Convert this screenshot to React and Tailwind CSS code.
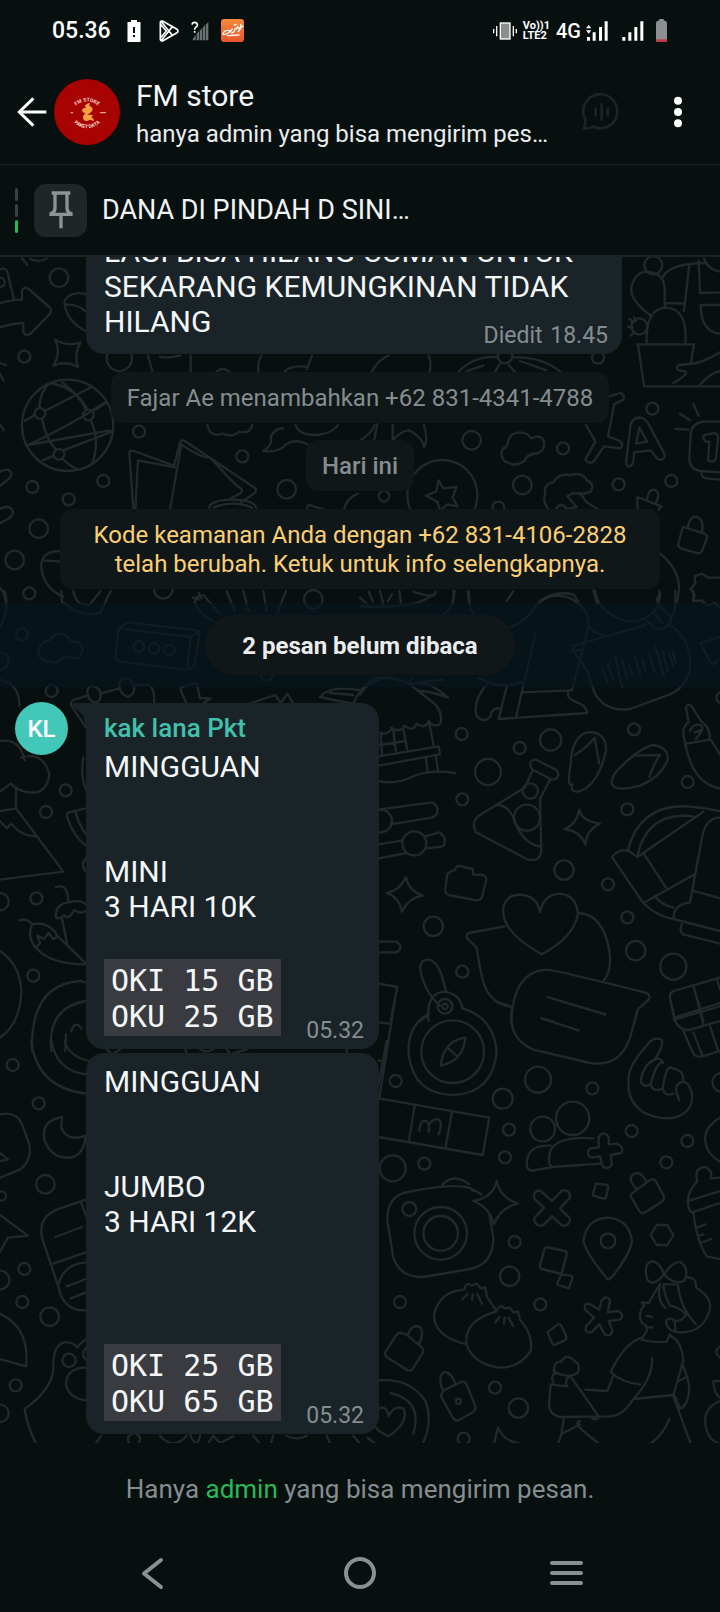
import React from 'react';

const ROBOTO = "font-['Roboto','Liberation_Sans',sans-serif]";
const MONO = "font-['DejaVu_Sans_Mono','Liberation_Mono',monospace]";

// Every wallpaper tile: where it starts, its loose circles [cx, cy, r] and its line drawings
const doodleTiles = [
  {
    x: 0,
    y: 720,
    circles: [
      [177, 110, 28], [73, 347, 18], [417, 572, 18], [310, 720, 18], [97, 738, 18], [206, 775, 18],
      [116, 863, 28], [44, 957, 28], [88, 1057, 18], [860, 745, 28], [727, 646, 18], [490, 1045, 28],
      [940, 1075, 28], [203, 553, 137], [120, 517, 16], [265, 522, 16], [177, 640, 16], [0, 124, 14],
      [358, 352, 38]
    ],
    paths: [
      // arrow
      'M0 85 Q16 78 22 92 L42 176',
      'M-10 190 Q30 176 66 176 L66 150 Q72 134 86 144 L148 198 Q158 208 148 220 L92 278 Q76 288 70 272 L70 246 Q30 248 -10 262',
      // leaf
      'M258 160 C220 148 190 168 194 192 C200 230 226 254 260 272 M194 192 Q230 186 260 214',
      // sparkle
      'M166 296 Q204 318 242 304 Q220 340 234 378 Q198 358 160 374 Q184 336 166 296 Z',
      // globe
      'M74 540 L104 522 M134 510 L275 438 M84 612 L330 568 M84 612 Q200 560 316 484 M128 658 L162 644 M190 628 L336 572',
      'M118 500 Q120 450 150 426 M126 534 Q136 590 168 626 M186 424 Q236 460 258 506 M150 426 Q230 440 262 506 M272 538 Q302 600 276 668 M188 654 Q210 676 236 686 M280 510 L318 486',
      // map
      'M400 806 L388 636 Q390 626 402 630 L522 674 L540 604 Q546 594 558 602 L764 740 Q772 748 764 756 L724 784 M406 806 L414 658 L528 680 M510 806 L544 610 Q600 650 630 650 C670 690 690 720 724 744 Q728 750 722 756 L690 774',
      'M628 800 C628 768 768 768 768 800 M640 800 Q700 776 756 800',
      // chilli and cloud
      'M622 552 Q630 590 668 578 Q700 590 716 572 Q752 580 756 552 M790 630 Q820 610 812 590 Q824 560 850 562 M790 630 Q840 636 860 608 Q890 592 926 612 M886 552 Q900 584 950 582 Q1000 576 1014 552',
      // things at the left edge
      'M-6 740 L26 714 Q40 700 30 690 Q20 680 -6 696 M-6 850 L30 830 Q44 818 36 806 Q26 790 -6 806 M0 366 L18 372 M0 398 L10 418 M-4 545 L12 568',
      'M444 344 L458 394 M572 344 L572 394 M784 344 Q770 368 776 394 M936 344 L920 386 M480 348 Q510 352 540 344 M852 394 Q870 370 924 378 M650 392 Q668 376 688 392',
      'M182 930 Q120 930 124 980 Q130 1040 190 1068 M130 958 L184 962 M0 1040 Q16 1060 18 1090',
      'M922 806 Q918 786 940 796 L974 806 M1032 806 Q1040 770 1074 758 M66 52 Q76 64 82 72 M90 54 Q120 66 140 52'
    ]
  },
  {
    x: 1080,
    y: 720,
    circles: [
      [335, 598, 28], [487, 732, 28], [609, 622, 18], [776, 730, 18], [934, 720, 18], [877, 503, 18],
      [714, 350, 18], [415, 800, 18], [247, 762, 105], [880, 73, 27], [838, 256, 24], [72, 765, 16],
      [435, 345, 22]
    ],
    paths: [
      // cactus
      'M832 310 L1002 310 L992 370 M834 310 L852 436 L1080 436 M860 308 Q856 202 918 200 Q984 202 976 308 M870 222 Q808 176 814 138 Q826 92 862 92 Q912 96 914 142 L914 200 M908 108 Q930 66 1040 66 M988 70 L972 210 M916 186 L970 188',
      'M808 234 L822 244 M804 258 L818 258 M812 284 L824 272 M822 228 L828 240',
      'M1016 60 L1020 156 L1080 154 M1022 192 L1080 192 M1022 192 Q1022 272 1080 278 M1032 52 Q1040 84 1080 92',
      // hand
      'M1080 334 Q1030 364 998 368 L956 372 Q944 382 958 388 L978 392 Q982 402 940 426 M1080 390 Q1050 396 1020 432',
      // bow
      'M34 394 Q54 356 86 344 M206 344 Q216 370 208 394 M294 394 Q340 344 412 348 M458 350 Q540 344 604 394 M320 390 L370 374 M404 394 L420 368 M446 372 L466 394 M480 360 L560 388',
      // X and A
      'M748 466 L780 456 Q796 460 790 476 L762 490 Q754 540 744 586 L780 600 Q794 612 780 622 L732 616 L702 660 Q688 672 676 656 L706 602 L678 552',
      'M798 664 L812 550 Q822 526 842 530 Q858 534 866 550 L912 636 Q918 652 904 656 Q892 658 886 646 L872 628 L822 634 L820 664 Q814 678 804 676 Q798 674 798 664 Z M828 608 L838 560 L862 602 Z',
      // keycap
      'M1080 542 L1030 542 Q994 546 992 580 L988 650 Q988 684 1020 690 L1080 694 M1024 690 Q1022 710 1040 712 L1080 716 M1030 592 Q1030 580 1042 580 L1064 576 Q1076 580 1074 592 L1068 652 Q1060 668 1044 658 L1048 602 Q1034 604 1030 592 M1000 488 L1016 524 M960 518 L990 538 M946 564 L984 566',
      // popcorn cloud
      'M436 662 Q416 640 430 622 Q444 616 444 602 Q450 574 480 574 Q506 576 512 592 Q544 578 552 602 Q556 628 534 636 Q510 640 502 646 Q488 674 458 670 Z',
      // star in a coin
      'M236 718 L250 742 L290 738 L278 768 L292 796 L262 790 L240 808 L232 782 L198 764 L228 752 Z',
      // curly head
      'M566 806 Q546 780 556 760 Q548 730 580 724 Q596 696 630 702 Q670 692 680 718 Q706 728 692 752 Q668 762 640 756 L622 766 L650 798 L620 804 Q604 780 588 804 M660 756 L680 784 L716 806',
      'M832 806 L832 768 L904 796 L896 806 M862 772 Q866 740 888 748 Q902 760 888 784',
      // lock
      'M970 858 L1034 878 Q1044 884 1040 894 L1026 930 Q1020 938 1010 936 L962 922 Q952 916 956 906 L966 866 Z M984 858 Q990 822 1012 828 Q1032 834 1026 874',
      'M52 550 L42 600 M2 598 Q36 576 44 552 M98 552 L98 598 Q120 570 148 568 Q188 590 192 618 Q206 600 192 552',
      'M898 936 Q980 1000 948 1090 M992 1044 L1006 1028 L1004 1006 L1026 998 L1046 1010 L1080 1010 M992 1044 L1004 1060 L1000 1080',
      'M26 1052 L38 1080 M96 1060 L84 1080 M160 1052 Q230 1076 226 1052 M284 1050 L276 1090 M326 1050 L330 1090 M540 1080 Q584 1048 640 1060 L654 1080 M700 1048 L712 1090 M900 1056 L890 1080'
    ]
  },
  {
    x: 0,
    y: 1770,
    circles: [
      [66, 130, 18], [155, 300, 18], [197, 598, 18], [138, 663, 18], [109, 922, 18], [100, 1154, 18],
      [0, 210, 26], [0, 932, 26], [417, 166, 16], [462, 172, 16], [508, 177, 16], [800, 250, 18]
    ],
    paths: [
      'M14 0 Q30 60 0 106 M184 0 L186 32 Q240 80 300 66 L332 0 M220 0 Q230 50 270 40 L302 0',
      // cloud
      'M148 212 Q112 208 116 176 Q124 150 148 150 Q160 124 186 128 Q206 134 212 152 Q250 148 246 182 Q240 206 218 200 Q200 196 188 202 Q172 220 148 212 Z',
      // eraser
      'M356 112 L384 94 L590 118 Q600 122 598 132 L584 220 Q576 236 556 236 L360 212 Q346 206 346 194 Z M356 112 L572 138 L596 124 M572 138 L562 232',
      // carrots
      'M640 90 Q590 64 584 32 Q590 10 612 14 L660 68 M578 20 L596 26 M596 6 L604 22 M680 0 L704 60 M730 0 L746 60 M858 0 L832 66 M790 0 L800 60',
      'M0 266 Q60 280 58 346 M0 450 Q60 440 74 508 M64 500 Q130 480 148 550 Q140 610 90 604 Q60 604 32 578 L0 602 M48 590 L48 652 L190 842 L0 866 M0 660 L48 652 M0 690 L20 712 L34 698 Q60 734 106 736',
      // notebook
      'M258 410 L212 340 Q216 322 236 322 L262 314 M300 308 L358 292 M400 284 L440 280 Q466 284 462 340',
      'M262 300 Q264 282 284 286 Q306 296 302 316 Q300 334 284 334 Q262 326 262 300 Z M358 280 Q362 258 384 264 Q408 276 402 298 Q396 318 380 316 Q358 308 358 280 Z',
      'M560 338 L542 298 Q540 290 552 286 L590 276 L600 322 L632 322 L606 340 M742 340 L826 312 L842 336 L862 308 L880 338 M960 318 Q990 280 1088 300 M960 318 Q1010 330 1060 338 M990 306 L1060 312 M1060 338 Q1080 290 1120 264 Q1160 250 1200 268',
      // watermelon
      'M258 652 L206 664 Q198 668 202 680 Q220 736 258 764 M226 662 Q236 700 258 730 M258 800 Q240 820 258 842',
      // ice cream cones
      'M168 888 Q196 880 202 908 L206 934 Q164 940 168 980 Q180 986 192 972 Q204 990 222 958 Q240 970 258 960 M206 934 Q240 924 258 940 M186 982 L202 1062 M58 988 Q84 980 96 1000 Q140 990 168 1026 Q176 1040 160 1044 L146 1026 L132 1044 L112 1034 L120 1056 L108 1070 Q80 1040 96 1000',
      'M108 1070 Q150 1120 258 1120 M168 1030 L258 1118 M0 1080 Q60 1120 64 1200 Q60 1300 0 1340',
      'M96 1380 Q90 1180 240 1170 L258 1174 M154 1380 Q140 1250 258 1230 M214 1320 Q226 1286 244 1312 M198 1330 L196 1380',
      'M246 340 L260 400 M250 500 Q240 560 260 600'
    ]
  },
  {
    x: 1080,
    y: 1770,
    circles: [
      [305, 429, 18], [479, 471, 18], [572, 447, 32], [384, 543, 39], [822, 415, 18], [983, 573, 18],
      [307, 625, 18], [802, 655, 18], [612, 837, 29], [744, 880, 18], [220, 1006, 29], [802, 979, 18],
      [827, 1079, 29], [940, 1127, 39], [307, 1142, 18], [511, 600, 23], [501, 680, 39], [163, 757, 36],
      [62, 690, 34], [255, 1246, 22], [255, 1246, 8], [1085, 320, 16]
    ],
    paths: [
      'M0 20 L22 40 M60 0 L70 40 M118 0 L124 44 Q180 40 220 10 M280 0 Q290 40 250 72 M324 0 Q324 50 342 72 M440 30 L460 0 M0 46 Q60 50 120 44',
      // sitting figure
      'M450 110 Q500 90 528 44 Q570 0 626 20 Q690 50 686 104 L636 298 M528 122 L468 378 M488 304 L630 298 M440 288 L416 384 L682 366 Q678 342 650 334 Q616 320 626 302 M486 272 Q430 300 356 260 M386 272 Q336 330 350 374 Q372 400 392 374 Q394 350 422 352 M684 104 Q706 130 736 134',
      'M706 0 Q710 60 800 92 Q850 94 884 60 Q904 30 898 0 M946 0 Q950 60 932 84 M856 84 L882 110 Q900 120 920 106 Q936 92 932 78 L898 44 M882 68 L906 94',
      // voice bubble
      'M660 176 L638 180 L640 164 L856 102 M930 104 Q980 130 990 200 Q996 280 930 310 L810 354 Q740 364 706 310 Q690 270 682 240 L660 206 L638 180',
      'M730 238 L742 274 M744 222 L758 264 M766 196 L786 288 M786 208 L802 262 M806 222 L816 250 M826 198 L840 252 M846 206 L856 238 M868 190 L884 244 M886 166 L912 254 M908 180 L924 240 M926 184 L940 226 M938 182 L948 216',
      'M1000 0 L1000 30 L1026 28 L1040 44 L1064 36 L1080 50 M1080 138 L1022 156 L1052 216 Q1062 224 1072 210',
      // beach hut
      'M0 310 Q30 262 90 262 Q120 262 152 282 L226 340 Q250 370 240 400 Q220 410 206 390 Q196 416 170 398 Q160 424 132 404 Q122 428 94 410 Q90 430 62 428 M150 280 Q200 262 264 320 Q210 300 180 300 M148 276 L156 262 M180 274 L250 266 M100 420 L108 484 M130 414 L142 476 M208 400 L222 468 M60 462 L136 450 M56 496 L236 466 L240 490 L56 524 M198 502 L202 540 M228 498 L234 540 M56 570 Q110 582 160 556 Q210 534 286 546 M62 424 L66 490',
      // sliders
      'M56 656 L214 634 Q236 642 232 664 Q228 676 214 680 L92 700 M56 760 L128 748 M196 736 L238 724 Q262 740 252 762 Q244 770 234 768 L200 772 M56 802 L140 786 M56 1052 L108 1052 Q124 1060 120 1074 Q116 1084 104 1084 L56 1084',
      // flask
      'M514 510 Q524 502 536 510 L590 538 Q598 548 592 560 Q584 568 572 564 L518 536 Q506 524 514 510 Z M518 538 L494 590 L356 674 Q332 694 348 724 L500 804 Q540 816 544 780 L540 624 L570 566 M414 642 Q448 644 464 690 Q490 760 540 766',
      // sandals
      'M636 580 Q620 590 632 520 Q634 440 680 424 Q740 420 738 480 Q720 560 680 590 Q650 610 636 596 Z M644 492 Q680 470 704 440 Q710 480 718 518 M756 580 Q750 560 780 530 Q840 470 880 462 Q930 470 922 510 Q900 560 840 584 Q770 604 756 580 Z M822 494 L900 492 Q880 520 868 558',
      // sparkles
      'M658 656 Q664 690 720 698 Q680 716 676 760 Q660 720 614 714 Q650 700 658 656 Z M138 858 Q146 900 188 914 Q146 920 126 962 Q116 916 80 906 Q120 898 138 858 Z',
      // brick
      'M262 850 Q268 840 284 838 Q290 820 304 826 L338 834 L340 850 L368 852 Q382 858 378 870 L366 918 Q360 930 348 928 L266 912 Q254 908 256 894 Z',
      // finger
      'M982 458 L1050 446 M976 456 Q960 410 986 394 L978 350 Q986 332 998 350 L1024 392 Q1050 406 1050 446 M990 420 Q1000 396 1020 402 Q1040 414 1004 424 L1026 418 L1008 444 M976 460 Q1000 580 1080 592 M1052 446 L1080 490',
      // backpack
      'M804 776 Q840 640 980 646 Q1030 650 1080 660 M832 796 Q860 660 1000 676 M756 798 Q780 770 806 780 L832 798 L1030 662 M756 798 L850 936 L1004 850 M850 936 Q890 976 940 984 Q940 940 990 934 L1028 730 Q1040 680 1080 680 M850 786 L918 890 M884 916 Q910 944 940 950 M1002 900 L1080 922 M940 984 L1080 1020 M966 1000 Q956 1020 970 1030 L1080 1058',
      // heart over the bubbles
      'M546 1090 Q420 1020 430 950 Q440 906 490 912 Q534 920 540 964 Q552 910 598 908 Q650 912 654 970 Q640 1040 546 1090 Z M434 1006 L326 1026 Q316 1032 322 1042 L350 1070 Q360 1140 372 1180 Q394 1240 456 1248 M656 966 Q730 970 748 1080 Q756 1140 732 1168',
      'M454 1290 Q460 1140 560 1136 Q590 1138 860 1206 Q874 1214 866 1226 L832 1256 L824 1290 M562 1218 L736 1270 M544 1282 L580 1292',
      // magnifier and compass ring
      'M240 1244 Q190 1200 180 1130 Q184 1104 206 1106 Q230 1110 244 1150 L258 1198 M206 1290 Q196 1210 250 1202 Q300 1206 308 1254 M180 1290 L206 1270 M56 1178 L112 1188 L92 1290',
      // gift
      'M1080 1160 L940 1200 Q928 1206 930 1220 L944 1290 M1000 1184 L1030 1290 M942 1286 L1080 1246 M1070 1164 L1080 1196'
    ]
  },
  {
    x: 1080,
    y: 3000,
    circles: [
      [107, 240, 18], [428, 293, 30], [534, 236, 39], [697, 262, 18], [447, 386, 18], [435, 469, 18],
      [193, 488, 18], [98, 502, 39], [815, 390, 18], [982, 420, 18], [919, 484, 18], [1085, 244, 28],
      [548, 384, 37], [638, 352, 50], [278, 152, 94], [148, 624, 21], [242, 697, 79], [242, 697, 52],
      [464, 723, 18], [449, 826, 29], [120, 903, 18], [541, 910, 18], [405, 1160, 18], [475, 1221, 29],
      [311, 1313, 18], [744, 720, 22], [1085, 1053, 16], [295, 1201, 8]
    ],
    paths: [
      // compass
      'M206 38 Q140 76 146 160 Q160 280 280 282 Q400 276 410 150 Q400 50 308 22 M316 110 Q250 120 242 194 Q310 180 316 110 Z M262 140 L292 166',
      'M104 0 L58 290 M56 64 L88 68 M56 178 L66 180',
      // chat bubble
      'M456 20 Q440 110 520 146 L690 186 Q780 200 810 110 L834 24 M544 52 L656 88 M600 0 L736 40 M404 0 L456 18',
      // gift
      'M932 0 L946 60 Q960 90 990 86 L1080 60 M1014 0 L1030 70 M944 50 L1080 6 M970 90 L1000 158 Q1010 170 1026 166 L1080 150 M1000 94 L1026 160 M1050 76 L1074 148',
      // fist
      'M806 240 Q800 200 860 134 Q880 104 904 116 Q914 130 884 176 M806 240 Q800 300 850 334 Q900 360 950 348 Q1000 330 996 280 Q986 236 962 244 Q944 250 950 276 L958 298 M884 176 Q850 190 842 240 Q850 262 872 250 M908 186 Q890 180 872 250 Q880 276 908 262 M938 202 Q920 184 908 262 Q914 288 940 278 M968 240 Q976 210 938 202 M884 176 Q900 166 910 186',
      // calendar strip
      'M56 292 L388 350 L368 462 L56 408 M164 314 L146 424 M276 332 L256 442 M178 390 Q180 354 200 360 Q210 370 206 392 M206 372 Q220 350 238 356 Q248 370 236 400',
      // group with plus
      'M700 412 Q600 404 572 446 Q560 490 576 498 L720 488 M572 434 Q500 430 500 490 Q502 512 520 508 L580 498 M716 408 Q730 386 746 408 L746 430 L772 428 Q794 440 784 456 L752 462 L756 490 Q740 512 726 492 L720 466 L694 470 Q674 456 690 442 L716 440 Z',
      // camera
      'M340 570 L332 562 Q280 544 130 576 Q80 594 82 660 L100 770 Q120 830 190 828 L330 804 Q400 790 400 710 L388 640 M246 552 Q280 514 328 550 M332 562 L364 580',
      'M410 540 Q420 590 474 608 Q420 620 402 670 Q390 620 340 600 Q400 590 410 540 Z',
      // cross, squares
      'M540 568 L576 600 L606 568 Q632 566 630 590 L600 622 L630 652 Q630 676 606 674 L576 646 L548 674 Q524 676 522 652 L552 620 L522 592 Q520 568 540 568 Z',
      'M708 548 L742 552 Q746 554 744 560 L738 590 Q734 594 728 592 L700 584 Q698 580 700 574 Z M560 738 L614 750 Q622 752 620 760 L606 814 Q602 820 594 816 L544 804 Q538 800 540 792 L554 742 Z M604 820 L634 824 Q640 828 636 836 L626 862 L594 852 Q590 848 594 842 Z M562 994 L594 970 Q600 968 604 974 L620 1008 Q620 1014 614 1018 L584 1032 Q578 1032 576 1026 Z',
      // locks
      'M812 580 L872 536 Q882 532 888 542 L912 586 Q914 596 906 602 L852 636 Q842 638 838 630 L812 586 Z M828 562 Q800 530 822 518 Q844 510 860 544 M136 998 L186 1040 Q192 1048 188 1056 L158 1104 Q150 1112 140 1106 L80 1068 Q72 1060 78 1050 L110 1000 Q118 992 128 998 Z M144 1000 Q156 968 180 978 Q194 996 176 1030',
      'M252 1168 L304 1142 Q314 1140 320 1150 L346 1216 Q348 1228 338 1234 L296 1258 Q284 1260 278 1250 L244 1188 Q242 1176 252 1168 Z M248 1166 Q232 1126 252 1114 Q272 1110 286 1148',
      // pin and hexagon
      'M744 836 Q680 760 670 720 Q680 652 744 650 Q808 656 816 720 Q810 760 756 828 Z M890 672 L922 672 L940 702 L922 732 L890 732 L872 702 Z',
      // bottle
      'M1012 540 Q1000 500 1036 498 Q1060 510 1052 532 L1080 530 M1012 540 Q984 570 984 600 Q984 630 996 634 L1080 606 M984 600 L1080 570 M1000 634 Q1010 720 1040 766 L1080 774 M1010 680 L1036 670 M1016 704 L1030 700 M1022 726 L1054 714 M1080 350 Q1030 380 1036 420 Q1040 460 1080 482',
      // dumplings
      'M320 1030 Q220 1006 222 940 Q240 870 312 866 Q320 840 334 854 L350 848 L362 862 L376 860 L380 886 L408 928 M320 1030 Q310 960 408 932 Q420 906 434 922 L450 920 L460 934 L474 932 L480 956 Q520 1000 512 1050 Q480 1100 420 1100 Q340 1090 320 1030 Z M322 880 L308 894 M338 880 L336 896 M352 880 L366 908 M418 948 L406 964 M434 950 L432 968 M446 950 L460 976',
      // asterisk
      'M724 900 Q736 880 750 896 L744 934 L776 930 Q796 944 778 956 L746 960 L758 990 Q750 1010 734 1000 L718 970 L694 994 Q672 996 678 976 L702 950 L676 926 Q668 908 688 908 L718 926 Z',
      // girl with a bow
      'M912 820 Q880 860 862 836 Q848 790 876 780 Q900 784 912 820 Q940 778 964 784 Q990 810 972 840 Q940 852 912 820 Z M900 850 Q880 880 866 906 L846 904 L852 914 Q830 940 846 966 Q862 972 860 990 L844 1016 Q880 1026 920 1022 L930 1000 M860 944 L876 948 M862 978 L878 980',
      'M900 850 Q890 900 916 920 M980 830 Q1010 826 1008 860 Q1060 890 1048 930 Q1030 990 970 994 Q920 996 918 960 Q930 944 944 960 Q970 960 978 940 Q960 920 930 914 Q912 880 910 850 M954 850 Q960 920 1008 970 M950 850 L912 850 M944 960 L946 990',
      'M844 1010 Q790 1030 752 1114 Q790 1146 840 1150 M876 1072 Q880 1130 820 1194 Q790 1244 750 1246 L600 1248 Q562 1240 568 1200 L572 1150 L620 1156 M820 1194 L940 1182 L970 1080 Q966 1020 930 1004 M966 1090 Q996 1150 984 1190 Q976 1220 960 1222 L946 1186 M760 1124 L742 1170 L676 1166 M940 1186 L992 1328 M928 1254 Q910 1300 872 1328 M956 1140 L976 1130',
      'M582 1112 Q580 1080 604 1082 Q620 1054 644 1080 Q662 1090 654 1114 Q640 1130 600 1120 Z M580 1144 Q570 1120 590 1116 M620 1156 Q614 1134 630 1124 L716 1246 Q712 1260 696 1252 M612 1250 L604 1300 L660 1270 M604 1300 L594 1328 M660 1260 Q640 1262 670 1290 L716 1328',
      // heart ring
      'M56 1138 Q150 1130 196 1200 Q220 1260 188 1328 M92 1176 Q190 1200 160 1298 M56 1222 Q80 1212 86 1246 Q100 1212 130 1222 Q150 1260 86 1306 Q60 1296 44 1276',
      'M402 1328 L414 1280 Q430 1320 480 1328 M1060 1140 L1080 1140 M1060 1140 Q1062 1180 1080 1190 M1080 1200 Q1030 1220 1036 1270 Q1044 1320 1080 1328 M22 1310 L46 1328'
    ]
  },
  {
    x: 0,
    y: 3120,
    circles: [
      [38, 72, 18], [116, 187, 18], [136, 430, 28], [73, 684, 18], [67, 783, 18], [149, 827, 28],
      [47, 1033, 18], [207, 958, 20], [0, 1117, 26], [4, 465, 14], [0, 717, 28], [402, 1195, 18]
    ],
    paths: [
      'M94 0 Q110 140 258 158 M154 0 Q170 90 258 100 M194 0 Q210 50 270 60',
      // moon
      'M186 228 Q120 240 134 300 Q160 360 220 348 Q256 330 256 284 Q200 304 184 260 Z',
      'M0 220 Q50 210 66 250 L88 310 Q96 360 60 386 L0 410 M0 336 L24 356 L0 360',
      'M0 522 L84 584 L24 590 L0 632',
      // bread
      'M258 476 L170 506 Q114 530 126 590 L176 740 Q190 810 258 808 M166 588 L246 558 M160 668 L258 634 M176 730 Q190 670 258 664 M200 736 L258 714 M212 772 L258 754 M244 486 L258 526',
      'M0 818 Q90 860 78 976 L0 954',
      // bear
      'M108 1208 Q80 1150 74 1104 Q150 1050 160 990 Q156 900 204 904 Q224 906 232 920 Q244 902 258 896 M258 980 Q200 980 198 1030 Q206 1072 258 1078 M258 920 Q240 940 258 956',
      'M304 1184 L286 1208 M480 1184 Q520 1230 560 1184 M570 1180 Q590 1230 600 1184 M624 1208 L640 1184 L660 1206 L700 1186 M760 1184 L780 1208 M820 1184 L812 1208 M860 1184 Q890 1200 920 1184 M980 1184 L990 1208 M1060 1184 L1080 1208',
      'M320 24 L336 40 L360 26 M556 24 L560 40 M600 24 Q620 40 640 24 M680 24 L690 40 L744 24 M1040 24 L1040 44',
      'M1160 0 L1136 130'
    ]
  }
];

const Wallpaper = () => (
  <svg
    aria-hidden="true"
    className="absolute inset-0 h-full w-full"
    viewBox="0 768 2160 3561"
    preserveAspectRatio="xMidYMin slice"
    fill="none"
    stroke="#23292b"
    strokeWidth="7"
    strokeLinecap="round"
    strokeLinejoin="round"
  >
    {doodleTiles.map((tile) => (
      <g key={`${tile.x}-${tile.y}`} transform={`translate(${tile.x} ${tile.y})`}>
        {tile.circles.map(([cx, cy, r]) => (
          <circle key={`${cx}-${cy}-${r}`} cx={cx} cy={cy} r={r} />
        ))}
        {tile.paths.map((d) => (
          <path key={d} d={d} />
        ))}
      </g>
    ))}
  </svg>
);

const StatusBar = () => (
  <div className="flex h-[60px] shrink-0 items-center justify-between pl-[52px] pr-[53px] pt-px text-white">
    <div className="flex items-center">
      <span className="text-[23px] font-medium leading-7">05.36</span>
      <svg className="ml-4 h-[22px] w-[14px]" viewBox="0 0 14 22">
        <path fill="#fff" d="M4 0h6v2h3.500v20H.500V2H4z" />
        <path fill="#080f0f" d="M6 7h2v6H6zM6 15h2v2H6z" />
      </svg>
      <svg className="ml-[18px] h-[22px] w-5" viewBox="0 0 60 66" fill="none" stroke="#fff" strokeWidth="5" strokeLinejoin="round">
        <path d="M4 6Q6 2 12 4L54 28Q60 33 54 38L12 62Q5 65 4 58ZM6 4L40 46M6 62L40 20M4 12L22 33L4 54" />
      </svg>
      <svg className="ml-3 h-5 w-[18px]" viewBox="0 0 54 60">
        <path fill="#6b7171" d="M8 50l6-8v16H4zM17 38l7-7v27h-7zM26 29l7-7v36h-7zM35 20l7-7v45h-7zM44 11l8-8v55h-8z" />
        <path fill="none" stroke="#fff" strokeWidth="5" d="M3 11Q4 4 11 4Q19 4 19 12Q19 17 14 19Q11 21 11 26M11 30v5" />
      </svg>
      <svg className="ml-3 h-[23px] w-[23px]" viewBox="0 0 69 69">
        <defs>
          <linearGradient id="appIcon" x1="0" y1="0" x2="0" y2="1">
            <stop offset="0" stopColor="#f98a3c" />
            <stop offset="1" stopColor="#e8552a" />
          </linearGradient>
        </defs>
        <rect width="69" height="69" rx="10" fill="url(#appIcon)" />
        <path fill="none" stroke="#fff" strokeWidth="4" strokeLinecap="round" d="M5 45Q10 34 20 34Q30 33 25 40Q18 46 8 47M28 38L34 30M32 42Q42 40 42 28M46 30L50 22M52 38Q60 30 60 16M50 28L66 22M20 50L54 48M40 18L46 16" />
      </svg>
    </div>
    <div className="flex items-center">
      <svg className="h-5 w-6" viewBox="0 0 72 60" fill="none" stroke="#fff" strokeWidth="4">
        <rect x="22" y="6" width="29" height="48" fill="#8a8f8f" />
        <path d="M2 24v13M11 15v31M61 15v31M70 24v13" />
      </svg>
      <div className="ml-[6px] flex flex-col text-[11px] font-bold leading-[10px]">
        <span>Vo))1</span>
        <span>LTE2</span>
      </div>
      <span className="ml-[6px] text-[20px] font-medium leading-6">4G</span>
      <svg className="ml-[5px] h-5 w-[22px]" viewBox="0 0 66 60" fill="#fff">
        <path d="M8 12l8 10H0zM8 38l8-10H0zM3 48h9v11H3zM20 34h9v25h-9zM39 18h9v41h-9zM56 1h9v58h-9z" />
      </svg>
      <svg className="ml-[14px] h-5 w-[22px]" viewBox="0 0 66 60" fill="#fff">
        <path d="M1 48h9v11H1zM19 34h9v25h-9zM37 18h9v41h-9zM55 1h9v58h-9z" />
      </svg>
      <svg className="ml-3 h-[23px] w-[11px]" viewBox="0 0 33 69">
        <path fill="#8c8f90" d="M10 0h13v4q10 2 10 9v54H0V13q0-7 10-9z" />
        <path fill="#c23a42" d="M0 61h33v4q0 4-4 4H4q-4 0-4-4z" />
      </svg>
    </div>
  </div>
);

const GroupAvatar = () => (
  <svg className="h-[66px] w-[66px] shrink-0" viewBox="0 0 198 198" role="img" aria-label="FM store">
    <defs>
      <path id="arcTop" d="M60 86Q99 48 138 86" />
      <path id="arcBottom" d="M52 124Q99 172 146 124" />
    </defs>
    <circle cx="99" cy="99" r="99" fill="#a80303" />
    <g fill="#f6dcd0" fontFamily="Roboto, sans-serif" fontSize="15" fontWeight="700" textAnchor="middle">
      <text><textPath href="#arcTop" startOffset="50%">FM STORE</textPath></text>
      <text><textPath href="#arcBottom" startOffset="50%">PAKET DATA</textPath></text>
    </g>
    <path stroke="#e8a08a" strokeWidth="4" d="M50 101h7M138 101h18" />
    <path fill="#f7a040" d="M94 78q8-6 14-6l-2 8q8 2 10 10q0 8-8 12l-8 6q10-2 18 2l-6 4q8 4 8 12l-14-4q-2 4-10 4q-12-4-8-16l6-8q-10-2-10-10q2-6 12-6q-4-4-2-8z" />
  </svg>
);

const Header = () => (
  <header className="flex h-[105px] shrink-0 items-center border-b border-[#1b2323] pl-[15px] pr-[34px]">
    <button type="button" aria-label="Kembali" className="h-[34px] w-[34px] shrink-0">
      <svg className="h-[34px] w-[34px]" viewBox="0 0 102 102" fill="none" stroke="#fff" strokeWidth="9">
        <path d="M55 10L13 51L55 92M11 51H94" />
      </svg>
    </button>
    <div className="ml-[5px]">
      <GroupAvatar />
    </div>
    <div className="ml-4 min-w-0 flex-1 pt-1">
      <h1 className="truncate text-[30px] leading-9 text-[#f4f7f8]">FM store</h1>
      <p className="mt-1 truncate text-[24px] leading-8 text-[#e9edee]">hanya admin yang bisa mengirim pes…</p>
    </div>
    <button type="button" aria-label="Obrolan suara" className="ml-4 h-10 w-10 shrink-0">
      <svg className="h-10 w-10" viewBox="0 0 120 120" fill="none" stroke="#1c2428" strokeWidth="8" strokeLinecap="round" strokeLinejoin="round">
        <path d="M9 110L14 84A51 51 0 1 1 36 104Q24 110 9 110ZM44 50v20M62 38v44M80 50v20" />
      </svg>
    </button>
    <button type="button" aria-label="Menu" className="ml-[49px] h-9 w-4 shrink-0">
      <svg className="h-9 w-4" viewBox="0 0 48 108" fill="#fff">
        <circle cx="24" cy="20" r="12" />
        <circle cx="24" cy="54" r="12" />
        <circle cx="24" cy="88" r="12" />
      </svg>
    </button>
  </header>
);

const PinnedBar = () => (
  <button
    type="button"
    className="flex h-[92px] w-full shrink-0 items-center border-b-2 border-[#1b2223] pl-[15px] text-left"
  >
    <span className="flex flex-col gap-[3px]">
      <span className="h-[13px] w-[3px] rounded-full bg-[#3a4243]" />
      <span className="h-[13px] w-[3px] rounded-full bg-[#3a4243]" />
      <span className="h-[13px] w-[3px] rounded-full bg-[#27b857]" />
    </span>
    <span className="ml-4 flex h-[53px] w-[53px] items-center justify-center rounded-xl bg-[#202628]">
      <svg className="h-[38px] w-6" viewBox="0 0 72 114" fill="none" stroke="#8b9497" strokeWidth="10">
        <path d="M8 6H64M18 6V52Q17 64 6 68V70H66V68Q55 64 54 52V6M36 70V112" />
      </svg>
    </span>
    <span className="ml-[15px] text-[27px] leading-8 text-[#f1f4f5]">DANA DI PINDAH D SINI…</span>
  </button>
);

const SystemChip = ({ children, className = '' }) => (
  <div className={`self-center rounded-xl bg-[#101718] px-4 pt-[2px] text-[24px] leading-[49px] text-[#858d90] ${className}`}>
    {children}
  </div>
);

// Line breaks and blank lines of the text are kept as typed
const Message = ({ author, text, code, time }) => (
  <article className={`relative ml-[86px] w-[293px] rounded-[18px] bg-[#1a2428] pb-[13px] pl-[18px] ${author ? 'rounded-tl-none pt-2' : 'pt-[11px]'}`}>
    {author && (
      <>
        <svg aria-hidden="true" className="absolute -left-[14px] top-0 h-4 w-[15px]" viewBox="0 0 15 16" fill="#1a2428">
          <path d="M3 0H15V16L1 3Q-1 0 3 0Z" />
        </svg>
        <span className="absolute -left-[71px] -top-px flex h-[53px] w-[53px] items-center justify-center rounded-full bg-[#42c7b8] text-[24px] font-medium text-white">
          KL
        </span>
        <p className="mb-1 text-[26px] font-medium leading-[34px] text-[#42c0ad]">{author}</p>
      </>
    )}
    <p className="whitespace-pre-wrap text-[30px] leading-[35px] text-[#f4f7f8]">{text}</p>
    <div className="flex items-end justify-between pr-[15px]">
      <pre className={`bg-[#3a3b40] px-[7px] pb-px pt-1 text-[30px] leading-9 text-[#f4f7f8] ${MONO}`}>{code}</pre>
      <time className="-mb-[9px] text-[23px] leading-7 text-[#858d90]">{time}</time>
    </div>
  </article>
);

const Chat = () => (
  <main className="relative flex min-h-0 flex-1 flex-col justify-end overflow-hidden">
    <Wallpaper />
    <div className="relative flex flex-col pb-[9px]">
      <article className="ml-[86px] w-[536px] rounded-[18px] bg-[#1a2428] pb-[15px] pl-[18px] pr-[14px] pt-[11px]">
        <p className="text-[30px] leading-[35px] text-[#f4f7f8]">
          LAGI BISA HILANG CUMAN UNTUK
          <br />
          SEKARANG KEMUNGKINAN TIDAK
        </p>
        <div className="flex items-end justify-between">
          <p className="text-[30px] leading-[35px] text-[#f4f7f8]">HILANG</p>
          <span className="-mb-[11px] text-[23px] leading-7 text-[#858d90]">
            Diedit <time className="ml-[2px]">18.45</time>
          </span>
        </div>
      </article>

      <SystemChip className="mt-[18px]">Fajar Ae menambahkan +62 831-4341-4788</SystemChip>
      <SystemChip className="mt-[17px] font-medium">Hari ini</SystemChip>

      <button
        type="button"
        className="mx-[60px] mt-[18px] rounded-xl bg-[#101718] px-6 pb-[10px] pt-3 text-center text-[24px] leading-[29px] text-[#fbcf72]"
      >
        Kode keamanan Anda dengan +62 831-4106-2828
        <br />
        telah berubah. Ketuk untuk info selengkapnya.
      </button>

      <div className="mt-[14px] flex justify-center bg-[#06151f]/65 py-3">
        <span className="rounded-full bg-[#111718] px-[37px] pt-[2px] text-[24px] font-bold leading-[58px] text-[#e9edef]">
          2 pesan belum dibaca
        </span>
      </div>

      <div className="mt-4 flex flex-col gap-1">
        <Message
          author="kak lana Pkt"
          text={'MINGGUAN\n\n\nMINI\n3 HARI 10K\n\n'}
          code={'OKI 15 GB\nOKU 25 GB'}
          time="05.32"
        />
        <Message
          text={'MINGGUAN\n\n\nJUMBO\n3 HARI 12K\n\n\n\n'}
          code={'OKI 25 GB\nOKU 65 GB'}
          time="05.32"
        />
      </div>
    </div>
  </main>
);

const Footer = () => (
  <footer className="shrink-0">
    <p className="pb-[31px] pt-[29px] text-center text-[26px] leading-[34px] text-[#858d90]">
      Hanya <a href="#admin" className="text-[#27b857]">admin</a> yang bisa mengirim pesan.
    </p>
    <nav className="flex h-[75px] items-center justify-around px-[50px] pb-1">
      <button type="button" aria-label="Kembali" className="h-9 w-9">
        <svg className="h-9 w-9" viewBox="0 0 36 36" fill="none" stroke="#8b9091" strokeWidth="4" strokeLinecap="round" strokeLinejoin="round">
          <path d="M26 5L9 18.500L26 32" />
        </svg>
      </button>
      <button type="button" aria-label="Beranda" className="h-9 w-9">
        <svg className="h-9 w-9" viewBox="0 0 36 36" fill="none" stroke="#8b9091" strokeWidth="4">
          <circle cx="18" cy="18" r="14" />
        </svg>
      </button>
      <button type="button" aria-label="Aplikasi terbaru" className="h-9 w-9">
        <svg className="h-9 w-9" viewBox="0 0 36 36" stroke="#8b9091" strokeWidth="4" strokeLinecap="round">
          <path d="M3 8H32M3 18H32M3 28H32" />
        </svg>
      </button>
    </nav>
  </footer>
);

const App = () => (
  <div className={`flex h-screen flex-col overflow-hidden bg-[#080f0f] ${ROBOTO}`}>
    <StatusBar />
    <Header />
    <PinnedBar />
    <Chat />
    <Footer />
  </div>
);

export default App;
